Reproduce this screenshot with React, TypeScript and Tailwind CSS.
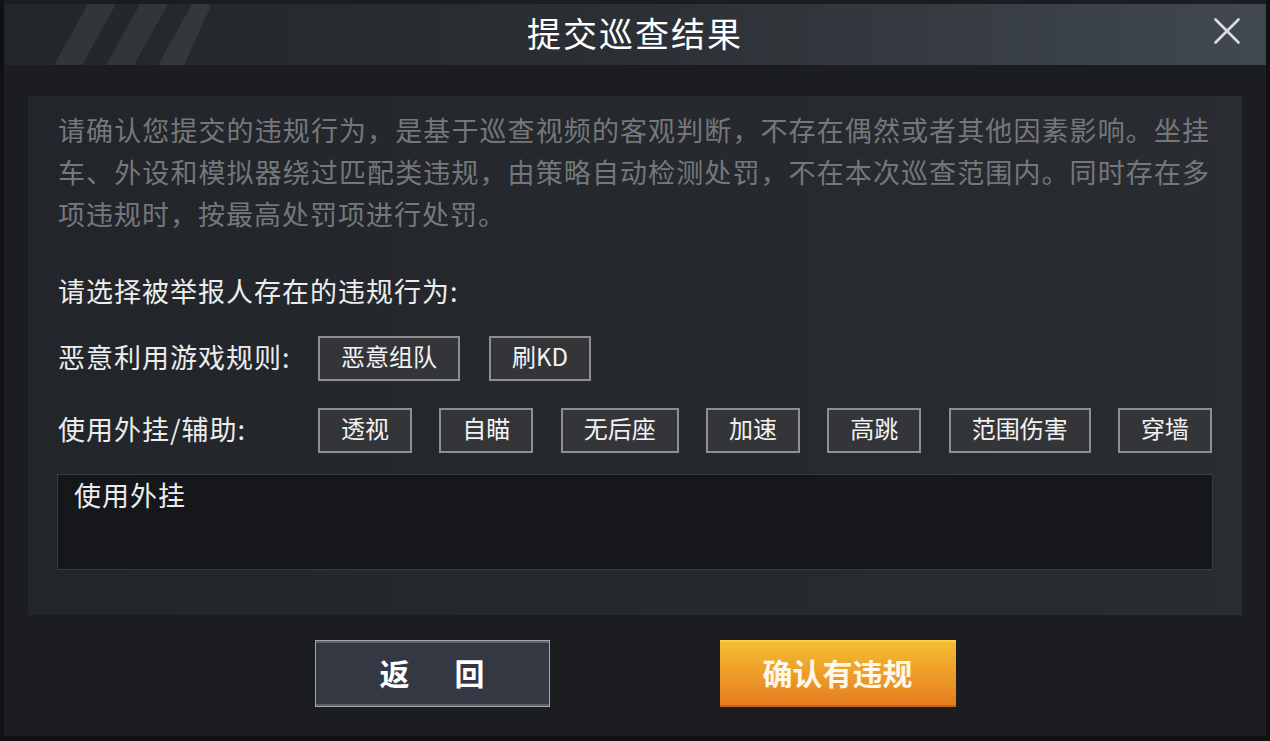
import { X } from "lucide-react";

const cheatRow1 = ["恶意组队", "刷KD"];
const cheatRow2 = ["透视", "自瞄", "无后座", "加速", "高跳", "范围伤害", "穿墙"];

const TagButton = ({ label }: { label: string }) => (
  <button className="h-[45px] border-2 border-[#8e8f91] bg-[#333539] px-[21px] pb-[5px] text-[24px] leading-none text-[#f2f2f2]">
    {label}
  </button>
);

export default function App() {
  return (
    <div className="h-[741px] w-[1270px] overflow-hidden bg-[#101114] font-['Noto_Sans_CJK_SC','Noto_Sans',sans-serif]">
      <div className="mx-[4px] flex h-[736px] flex-col bg-[#1b1d21] pt-[4px]">
        {/* Header */}
        <div className="relative flex h-[61px] items-center justify-center bg-linear-to-r from-[#22252a] via-[#2c3035] to-[#414850]">
          <svg className="absolute left-[46px] top-0 h-[61px] w-[160px]" viewBox="0 0 160 61">
            <polygon points="38,0 66,0 32,61 4,61" fill="#32363b" />
            <polygon points="90,0 118,0 84,61 56,61" fill="#32363b" />
            <polygon points="142,0 160,0 160,4 134,61 108,61" fill="#34383d" />
          </svg>
          <h1 className="pb-[4px] text-[34px] leading-none tracking-[2px] text-white">提交巡查结果</h1>
          <button className="absolute right-[16px] top-[4px] text-[#d9dde0]">
            <X className="h-[46px] w-[46px]" strokeWidth={1.4} />
          </button>
        </div>

        {/* Body */}
        <div className="px-[24px] pt-[31px]">
          <div className="h-[519px] bg-linear-to-r from-[#222529] to-[#292d32] pl-[30px] pr-[30px] pt-[13px]">
            <p className="w-[1152px] text-justify text-[27px] leading-[42px] tracking-[1px] text-[#75787b]">
              请确认您提交的违规行为，是基于巡查视频的客观判断，不存在偶然或者其他因素影响。坐挂车、外设和模拟器绕过匹配类违规，由策略自动检测处罚，不在本次巡查范围内。同时存在多项违规时，按最高处罚项进行处罚。
            </p>

            <p className="mt-[35px] text-[27px] leading-[42px] tracking-[1px] text-[#ececec]">
              请选择被举报人存在的违规行为:
            </p>

            <div className="mt-[24px] flex items-center">
              <span className="w-[260px] pb-[3px] text-[27px] tracking-[1px] text-[#ececec]">恶意利用游戏规则:</span>
              <div className="flex gap-[29px]">
                {cheatRow1.map((c) => (
                  <TagButton key={c} label={c} />
                ))}
              </div>
            </div>

            <div className="mt-[27px] flex items-center">
              <span className="w-[260px] pb-[3px] text-[27px] tracking-[1px] text-[#ececec]">使用外挂/辅助:</span>
              <div className="flex w-[894px] justify-between">
                {cheatRow2.map((c) => (
                  <TagButton key={c} label={c} />
                ))}
              </div>
            </div>

            <div className="-ml-px mt-[21px] h-[96px] w-[1156px] border border-[#373a3f] bg-[#15171a] px-[16px] text-[27px] leading-[40px] tracking-[1px] text-[#ececec]">
              使用外挂
            </div>
          </div>
        </div>

        {/* Footer buttons */}
        <div className="mt-[25px] flex justify-center gap-[170px]">
          <button className="flex h-[67px] w-[235px] items-center justify-center gap-[45px] border border-[#a3a7ad] bg-[#333843] pb-[3px] text-[30px] font-bold text-white shadow-[inset_0_2px_0_#5d626b,inset_0_-2px_0_#5d626b]">
            <span>返</span>
            <span>回</span>
          </button>
          <button className="flex h-[67px] w-[236px] items-center justify-center border-t-2 border-b-2 border-t-[#f7d048] border-b-[#c9651a] bg-linear-to-b from-[#f4bd30] to-[#e57c20] pb-[3px] text-[30px] font-bold text-[#fff8ea]">
            确认有违规
          </button>
        </div>
      </div>
    </div>
  );
}
